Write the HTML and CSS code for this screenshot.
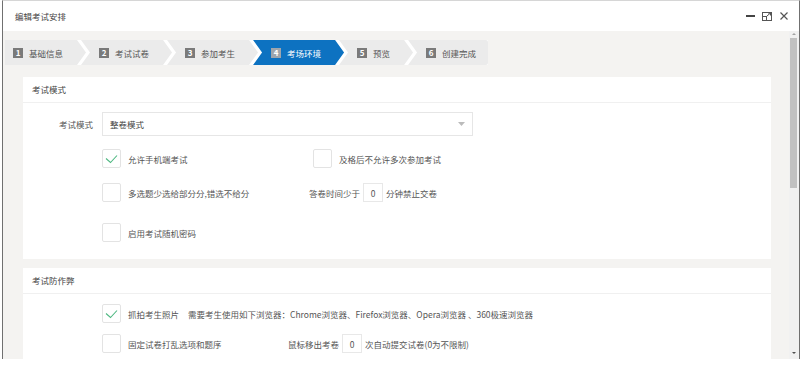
FILE: index.html
```html
<!DOCTYPE html>
<html lang="zh-CN">
<head>
  <meta charset="UTF-8" />
  <title>编辑考试安排</title>
  <link rel="stylesheet" href="styles.css">
</head>
<body>
  <div class="win">
    <div class="titlebar">
      <span class="title">编辑考试安排</span>
      <div class="controls">
        <span class="ctl-min"></span>
        <svg class="ctl-max" width="10" height="9" viewBox="0 0 10 9">
          <rect x="0.5" y="0.5" width="9" height="8" fill="none" stroke="#555"/>
          <rect x="0.5" y="4.5" width="4" height="4" fill="none" stroke="#555"/>
          <path d="M5 4 L8.5 1 M6 1 H8.5 V3.5" fill="none" stroke="#555"/>
        </svg>
        <svg class="ctl-close" width="8" height="8" viewBox="0 0 8 8">
          <path d="M0.5 0.5 L7.5 7.5 M7.5 0.5 L0.5 7.5" stroke="#555" stroke-width="1.2"/>
        </svg>
      </div>
    </div>

    <div class="body">
      <div class="main">
        <div class="steps">
          <div class="step first"><span class="num">1</span>基础信息</div>
          <div class="step"><span class="num">2</span>考试试卷</div>
          <div class="step"><span class="num">3</span>参加考生</div>
          <div class="step active"><span class="num">4</span>考场环境</div>
          <div class="step"><span class="num">5</span>预览</div>
          <div class="step last"><span class="num">6</span>创建完成</div>
        </div>

        <div class="card">
          <div class="card-head">考试模式</div>
          <div class="card-body first-body">
            <div class="form-row">
              <label class="form-label">考试模式</label>
              <div class="select">
                <span>整卷模式</span>
                <svg width="7" height="4" viewBox="0 0 7 4"><path d="M0 0 H7 L3.5 4 Z" fill="#bbb"/></svg>
              </div>
            </div>

            <div class="opt-row r1">
              <div class="opt w211"><span class="box checked"><svg width="19" height="19" viewBox="0 0 19 19"><polyline points="4,9.5 8.5,13.5 15,6.5" fill="none" stroke="#4fb882" stroke-width="1.1"/></svg></span>允许手机端考试</div>
              <div class="opt"><span class="box"></span>及格后不允许多次参加考试</div>
            </div>

            <div class="opt-row r2">
              <div class="opt w207"><span class="box"></span>多选题少选给部分分,错选不给分</div>
              <div class="inline-field">答卷时间少于<span class="num-input">0</span>分钟禁止交卷</div>
            </div>

            <div class="opt-row r3">
              <div class="opt"><span class="box"></span>启用考试随机密码</div>
            </div>
          </div>
        </div>

        <div class="card second">
          <div class="card-head">考试防作弊</div>
          <div class="card-body second-body">
            <div class="opt-row">
              <div class="opt"><span class="box checked"><svg width="19" height="19" viewBox="0 0 19 19"><polyline points="4,9.5 8.5,13.5 15,6.5" fill="none" stroke="#4fb882" stroke-width="1.1"/></svg></span>抓拍考生照片</div>
              <div class="browsers">需要考生使用如下浏览器：Chrome浏览器、Firefox浏览器、Opera浏览器 、360极速浏览器</div>
            </div>
            <div class="opt-row r5">
              <div class="opt w186"><span class="box"></span>固定试卷打乱选项和题序</div>
              <div class="inline-field">鼠标移出考卷<span class="num-input">0</span>次自动提交试卷(0为不限制)</div>
            </div>
          </div>
        </div>
      </div>

      <div class="scrollbar">
        <span class="arrow up"></span>
        <span class="thumb"></span>
        <span class="arrow down"></span>
      </div>
    </div>
  </div>
</body>
</html>
```

FILE: styles.css
```css
body {
  margin: 0;
  background: #fff;
  font-family: "Noto Sans CJK SC", "Noto Sans", sans-serif;
  font-size: 8.5px;
  color: #555;
}

.win {
  box-sizing: border-box;
  width: 798px;
  height: 359px;
  margin-left: 2px;
  border-left: 1px solid #707070;
  border-right: 1px solid #707070;
  border-top: 1px solid #d6d6d6;
  display: flex;
  flex-direction: column;
  overflow: hidden;
}

.titlebar {
  height: 30px;
  background: #fff;
  display: flex;
  align-items: center;
  justify-content: space-between;
  padding: 0 11px 0 12px;
  flex-shrink: 0;
}

.title {
  color: #444;
}

.controls {
  display: flex;
  align-items: center;
  gap: 7px;
}

.ctl-min {
  display: block;
  width: 9px;
  height: 2px;
  background: #444;
}

.ctl-close {
  margin-left: 1px;
}

.body {
  flex: 1;
  display: flex;
  min-height: 0;
}

.main {
  flex: 1;
  background: #f4f3f1;
  padding-top: 9px;
  overflow: hidden;
}

/* steps */
.steps {
  display: inline-flex;
  background: #fff;
  margin-left: 2px;
  height: 25px;
}

.step {
  display: flex;
  align-items: center;
  height: 25px;
  padding: 0 23px 0 18px;
  margin-left: -5px;
  background: #ebebeb;
  color: #555;
  white-space: nowrap;
  clip-path: polygon(0 0, calc(100% - 9px) 0, 100% 50%, calc(100% - 9px) 100%, 0 100%, 9px 50%);
}

.step.first {
  margin-left: 0;
  padding-left: 8px;
  clip-path: polygon(0 0, calc(100% - 9px) 0, 100% 50%, calc(100% - 9px) 100%, 0 100%);
}

.step.last {
  padding-right: 12px;
  border-radius: 0 2px 2px 0;
  clip-path: polygon(0 0, 100% 0, 100% 100%, 0 100%, 9px 50%);
}

.step.active {
  background: #0d72c1;
  color: #fff;
}

.num {
  display: inline-flex;
  align-items: center;
  justify-content: center;
  width: 10px;
  height: 10px;
  margin-right: 6px;
  background: #7a7a7a;
  color: #fff;
  font-size: 8px;
  font-weight: bold;
  line-height: 1;
}

.step.active .num {
  background: #9ea5ad;
}

/* cards */
.card {
  background: #fff;
  margin: 12px 18px 0 20px;
}

.card.second {
  margin-top: 9px;
}

.card-head {
  height: 25px;
  line-height: 25px;
  padding-left: 9px;
  color: #444;
  border-bottom: 1px solid #f0f0f0;
}

.card-body {
  padding-bottom: 17px;
}

.first-body {
  padding-top: 9px;
}

.second-body {
  padding-top: 10px;
}

.form-row {
  display: flex;
  align-items: center;
}

.form-label {
  width: 70px;
  text-align: right;
  margin-right: 9px;
}

.select {
  box-sizing: border-box;
  width: 371px;
  height: 24px;
  border: 1px solid #e6e6e6;
  display: flex;
  align-items: center;
  justify-content: space-between;
  padding: 0 7px 0 7px;
  color: #444;
}

.opt-row {
  display: flex;
  align-items: center;
  padding-left: 79px;
  height: 19px;
}

.opt-row.r1 {
  margin-top: 13px;
}

.opt-row.r2 {
  margin-top: 15px;
}

.opt-row.r3 {
  margin-top: 21px;
}

.opt-row.r5 {
  margin-top: 11px;
}

.opt {
  display: flex;
  align-items: center;
  white-space: nowrap;
}

.w211 { width: 211px; }
.w207 { width: 207px; }
.w186 { width: 186px; }

.box {
  box-sizing: border-box;
  width: 19px;
  height: 19px;
  border: 1px solid #e3e3e3;
  border-radius: 2px;
  background: #fff;
  margin-right: 7px;
  position: relative;
  flex-shrink: 0;
}

.box svg {
  position: absolute;
  left: -1px;
  top: -1px;
}

.inline-field {
  display: flex;
  align-items: center;
  white-space: nowrap;
}

.num-input {
  box-sizing: border-box;
  width: 20px;
  height: 19px;
  border: 1px solid #e8e8e8;
  display: inline-flex;
  align-items: center;
  justify-content: center;
  margin: 0 3px 0 3px;
  color: #555;
}

.browsers {
  margin-left: 9px;
  white-space: nowrap;
}

/* scrollbar */
.scrollbar {
  width: 10px;
  background: #f1f1f1;
  position: relative;
  flex-shrink: 0;
}

.thumb {
  position: absolute;
  left: 1px;
  top: 7px;
  width: 7px;
  height: 150px;
  background: #c1c1c1;
}

.arrow {
  position: absolute;
  left: 3px;
  width: 0;
  height: 0;
  border-left: 2px solid transparent;
  border-right: 2px solid transparent;
}

.arrow.up {
  top: 2px;
  border-bottom: 2px solid #a3a3a3;
}

.arrow.down {
  bottom: 5px;
  border-top: 2px solid #505050;
}
```
